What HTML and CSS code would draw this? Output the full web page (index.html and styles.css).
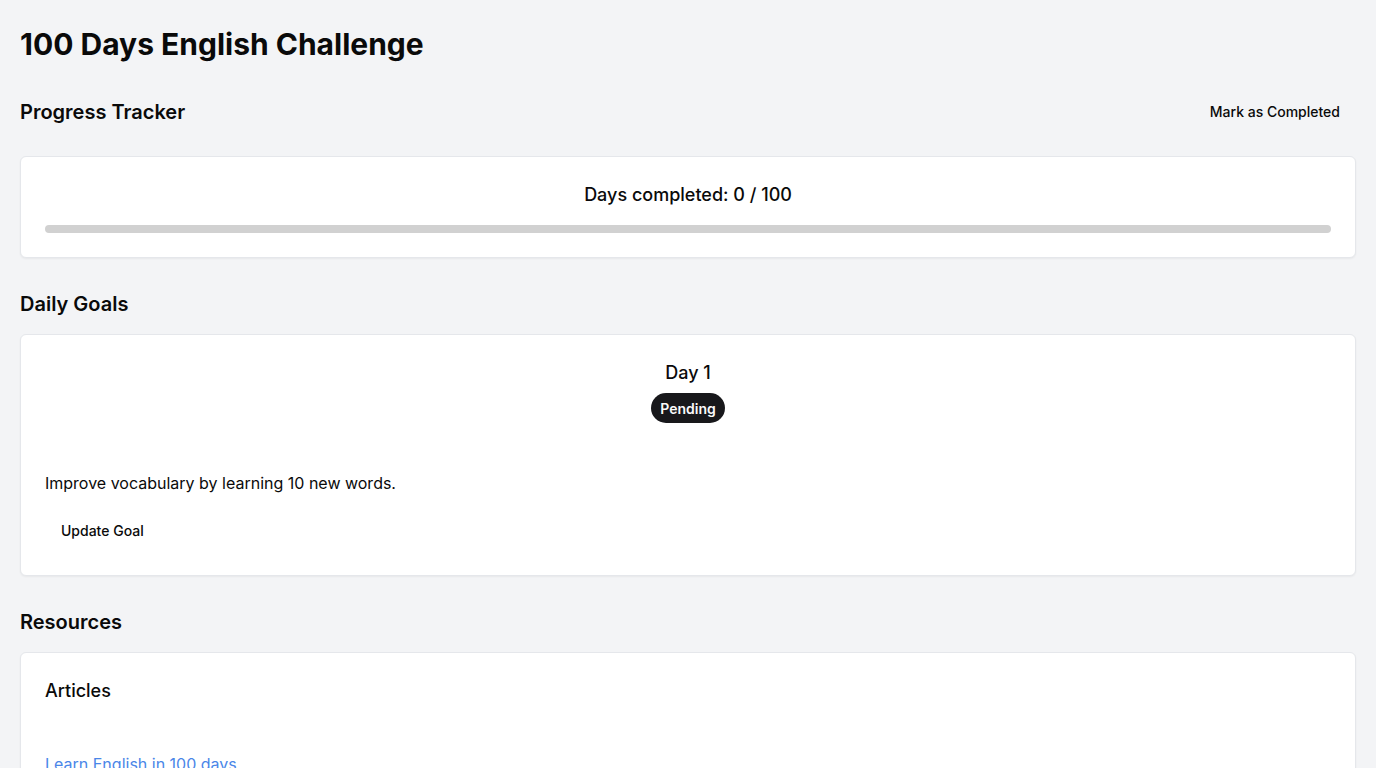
FILE: index.html
```html
<!DOCTYPE html>
<html lang="en">
<head>
<meta charset="utf-8">
<title>100 Days English Challenge</title>
<link rel="stylesheet" href="styles.css">
</head>
<body>
<main class="page">
  <h1 class="title">100 Days English Challenge</h1>

  <section class="section section-progress">
    <div class="section-head">
      <h2 class="section-title">Progress Tracker</h2>
      <button class="btn-ghost btn-head">Mark as Completed</button>
    </div>
    <div class="card progress-card">
      <p class="progress-label">Days completed: 0 / 100</p>
      <div class="progress-track"><div class="progress-fill" style="width:0%"></div></div>
    </div>
  </section>

  <section class="section">
    <h2 class="section-title plain">Daily Goals</h2>
    <div class="card goal-card">
      <div class="goal-head">
        <h3 class="goal-day">Day 1</h3>
        <span class="badge">Pending</span>
      </div>
      <p class="goal-text">Improve vocabulary by learning 10 new words.</p>
      <button class="btn-ghost btn-left">Update Goal</button>
    </div>
  </section>

  <section class="section">
    <h2 class="section-title plain">Resources</h2>
    <div class="card res-card">
      <h3 class="res-title">Articles</h3>
      <a class="res-link" href="#">Learn English in 100 days</a>
    </div>
  </section>
</main>
</body>
</html>
```

FILE: styles.css
```css
* { box-sizing: border-box; }
html, body { margin: 0; padding: 0; }
body {
  background: #f3f4f6;
  color: #0a0a0a;
  font-family: Inter, "Noto Sans", sans-serif;
  -webkit-font-smoothing: antialiased;
}
.page {
  padding: 26px 20px 20px;
}
.title {
  margin: 0;
  font-size: 30px;
  line-height: 36px;
  font-weight: 700;
}
.section { margin-top: 32px; }
.section-progress { margin-top: 30px; }
.section-head {
  display: flex;
  align-items: center;
  justify-content: space-between;
  height: 40px;
  margin-bottom: 24px;
}
.section-title {
  margin: 0;
  font-size: 20px;
  line-height: 28px;
  font-weight: 600;
}
.section-title.plain { margin-bottom: 16px; }
.btn-ghost {
  background: transparent;
  border: 0;
  height: 40px;
  padding: 0 16px;
  font-family: inherit;
  font-size: 14px;
  font-weight: 500;
  color: #0a0a0a;
  border-radius: 6px;
  cursor: pointer;
}
.btn-head { padding-bottom: 2px; }
.card {
  background: #ffffff;
  border: 1px solid #e5e7eb;
  border-radius: 6px;
  box-shadow: 0 1px 2px rgba(0,0,0,0.05);
  padding: 24px;
}
.progress-card { padding: 24px; }
.goal-card { padding: 24px 24px 25px; }
.progress-label {
  margin: 0;
  text-align: center;
  font-size: 18px;
  line-height: 28px;
  font-weight: 500;
}
.progress-track {
  margin-top: 16px;
  height: 8px;
  border-radius: 999px;
  background: #d1d1d1;
  overflow: hidden;
}
.progress-fill { height: 100%; background: #18181b; }
.goal-head {
  display: flex;
  flex-direction: column;
  align-items: center;
}
.goal-day {
  margin: 0;
  font-size: 18px;
  line-height: 28px;
  font-weight: 500;
}
.badge {
  margin-top: 6px;
  display: inline-flex;
  align-items: center;
  height: 30px;
  padding: 0 9px;
  border-radius: 999px;
  background: #18181b;
  color: #fafafa;
  font-size: 14px;
  font-weight: 600;
}
.goal-text {
  margin: 48px 0 0;
  font-size: 16px;
  line-height: 24px;
}
.btn-left { margin-top: 15px; display: block; }
.res-title {
  margin: 0;
  font-size: 18px;
  line-height: 28px;
  font-weight: 500;
}
.res-link {
  display: block;
  margin-top: 47px;
  font-size: 16px;
  line-height: 24px;
  color: #4a86e8;
  text-decoration: none;
}
```
